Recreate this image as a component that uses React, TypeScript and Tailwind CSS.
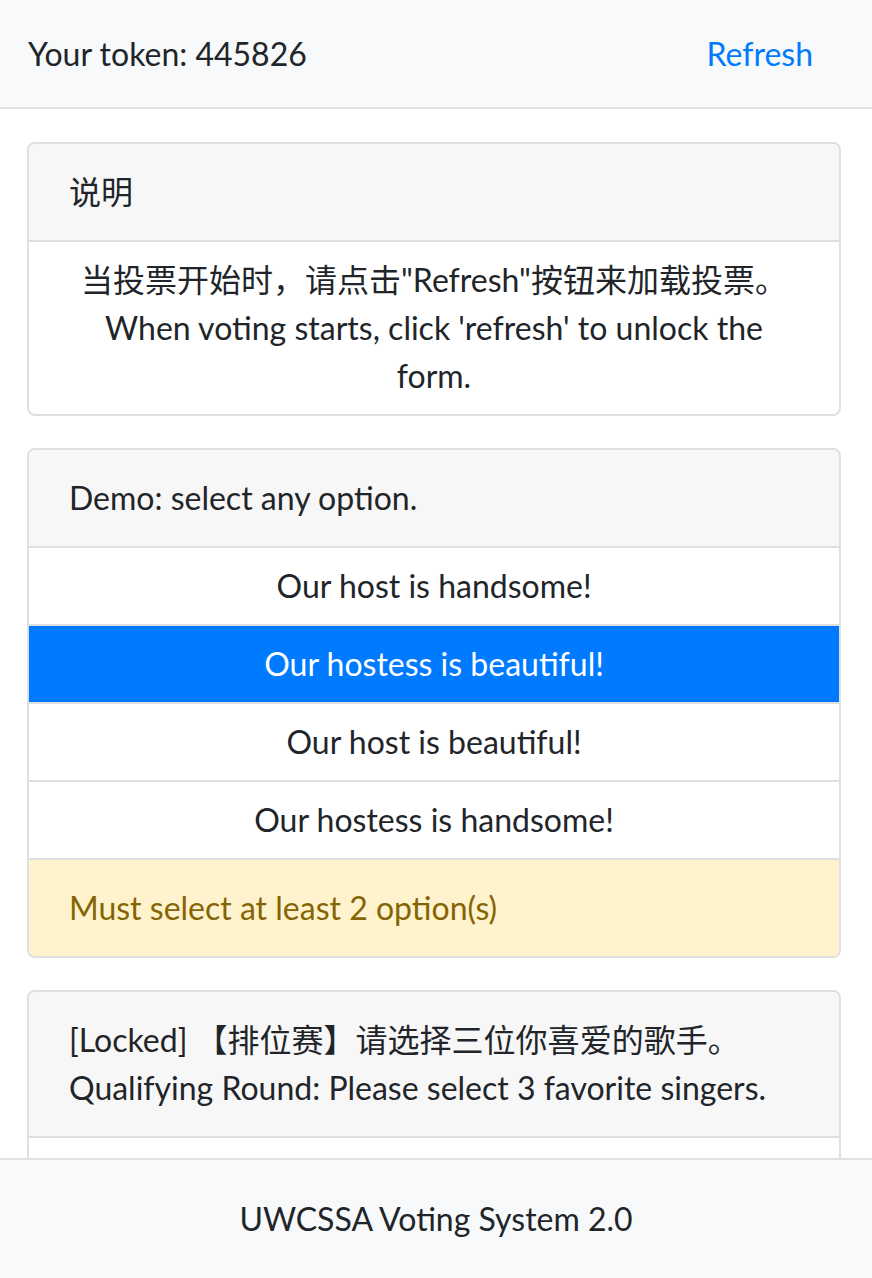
import React from 'react'

const font = {fontFamily: 'Lato, "Noto Sans CJK SC", sans-serif'}

const options = [
    {label: 'Our host is handsome!', selected: false},
    {label: 'Our hostess is beautiful!', selected: true},
    {label: 'Our host is beautiful!', selected: false},
    {label: 'Our hostess is handsome!', selected: false},
]

const Card = ({header, children}: {header: React.ReactNode, children?: React.ReactNode}) => (
    <div className="shrink-0 overflow-hidden rounded-lg border-2 border-[#dfdfdf] bg-white">
        <div className="bg-[#f7f7f7] px-10 py-6">{header}</div>
        {children}
    </div>
)

const App = () => {
    return (
        <div className="flex h-[1278px] w-full flex-col overflow-hidden bg-white text-[32px] leading-[48px] text-[#212529]"
             style={font}>
            <div className="flex h-[109px] shrink-0 items-center justify-between border-b-2 border-[#dfe1e4] bg-[#f8f9fa] pl-7 pr-[59px]">
                <span>Your token: 445826</span>
                <a className="text-[#007bff]">Refresh</a>
            </div>

            <div className="flex min-h-0 flex-1 flex-col gap-[32px] overflow-hidden pl-[27px] pr-[31px] pt-[33px]">
                <Card header={<span>说明</span>}>
                    <div className="border-t-2 border-[#dfdfdf] px-10 py-[14px] text-center">
                        当投票开始时，请点击"Refresh"按钮来加载投票。<br/>
                        When voting starts, click 'refresh' to unlock the<br/>
                        form.
                    </div>
                </Card>

                <Card header={<span>Demo: select any option.</span>}>
                    {options.map(o => (
                        <div key={o.label}
                             className={o.selected
                                 ? 'border-t-2 border-[#dfdfdf] bg-[#007bff] py-[14px] text-center text-white'
                                 : 'border-t-2 border-[#dfdfdf] bg-white py-[14px] text-center'}>
                            {o.label}
                        </div>
                    ))}
                    <div className="border-t-2 border-[#dfdfdf] bg-[#fff3cd] px-10 py-6 text-[#856404]">
                        Must select at least 2 option(s)
                    </div>
                </Card>

                <Card header={<span>[Locked] 【排位赛】请选择三位你喜爱的歌手。<br/>Qualifying Round: Please select 3 favorite singers.</span>}>
                    <div className="border-t-2 border-[#dfdfdf] py-[14px] text-center">&nbsp;</div>
                    <div className="border-t-2 border-[#dfdfdf] py-[14px] text-center">&nbsp;</div>
                </Card>
            </div>

            <div className="flex h-[120px] shrink-0 items-center justify-center border-t-2 border-[#dfe1e4] bg-[#f8f9fa]">
                UWCSSA Voting System 2.0
            </div>
        </div>
    )
}

export default App
